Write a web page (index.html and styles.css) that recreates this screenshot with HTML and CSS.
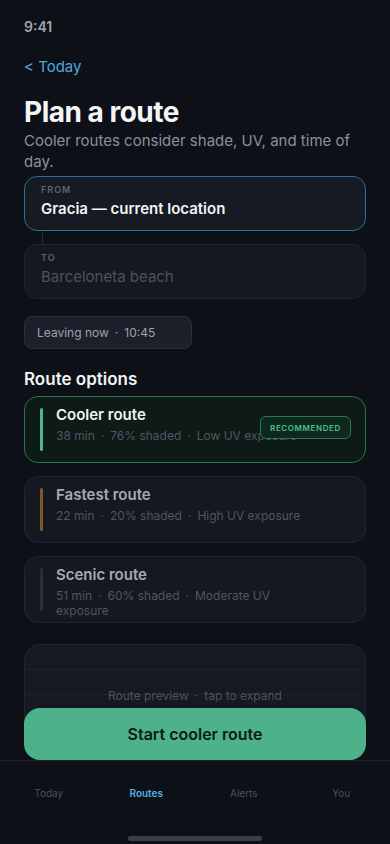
FILE: index.html
```html
<!DOCTYPE html>
<html lang="en">
<head>
  <meta charset="UTF-8" />
  <title>Plan a route</title>
  <link rel="stylesheet" href="styles.css">
</head>
<body>
  <div class="screen">
    <div class="status">9:41</div>

    <main class="content">
      <a class="back" href="#">&lt; Today</a>
      <h1>Plan a route</h1>
      <p class="subtitle">Cooler routes consider shade, UV, and time of day.</p>

      <div class="field field-active">
        <span class="field-label">From</span>
        <span class="field-value">Gracia — current location</span>
      </div>
      <div class="connector"></div>
      <div class="field">
        <span class="field-label">To</span>
        <span class="field-value placeholder">Barceloneta beach</span>
      </div>

      <div class="pill">Leaving now<span class="sep">·</span>10:45</div>

      <h2>Route options</h2>

      <div class="routes">
        <div class="route route-cool">
          <div class="route-bar"></div>
          <div class="route-text">
            <div class="route-title">Cooler route</div>
            <div class="route-meta">38 min<span class="sep">·</span>76% shaded<span class="sep">·</span>Low UV exposure</div>
          </div>
          <span class="badge">Recommended</span>
        </div>

        <div class="route route-fast">
          <div class="route-bar"></div>
          <div class="route-text">
            <div class="route-title">Fastest route</div>
            <div class="route-meta">22 min<span class="sep">·</span>20% shaded<span class="sep">·</span>High UV exposure</div>
          </div>
        </div>

        <div class="route route-scenic">
          <div class="route-bar"></div>
          <div class="route-text">
            <div class="route-title">Scenic route</div>
            <div class="route-meta">51 min<span class="sep">·</span>60% shaded<span class="sep">·</span>Moderate UV exposure</div>
          </div>
        </div>
      </div>

      <div class="map">Route preview<span class="sep">·</span>tap to expand</div>
    </main>

    <div class="cta">
      <button class="start">Start cooler route</button>
    </div>

    <nav class="tabs">
      <a href="#">Today</a>
      <a href="#" class="active">Routes</a>
      <a href="#">Alerts</a>
      <a href="#">You</a>
    </nav>
    <div class="home-bar"></div>
  </div>
</body>
</html>
```

FILE: styles.css
```css
* {
  box-sizing: border-box;
  margin: 0;
  padding: 0;
}

body {
  background: #0d1016;
  font-family: Inter, 'Noto Sans', sans-serif;
  color: #f1f3f5;
}

a {
  text-decoration: none;
}

.screen {
  position: relative;
  width: 390px;
  height: 844px;
  overflow: hidden;
  display: flex;
  flex-direction: column;
  background: #0d1016;
}

.status {
  height: 37px;
  padding: 17px 24px 0;
  font-size: 14px;
  line-height: 20px;
  font-weight: 600;
  color: #a1a5ad;
}

.content {
  flex: 1;
  overflow: hidden;
  padding: 0 24px;
  display: flex;
  flex-direction: column;
}

.back {
  margin-top: 20px;
  font-size: 15px;
  line-height: 20px;
  color: #4aa9dc;
}

h1 {
  margin-top: 19px;
  font-size: 28px;
  line-height: 32px;
  font-weight: 700;
  letter-spacing: -0.5px;
  color: #f4f5f7;
}

.subtitle {
  margin-top: 2px;
  font-size: 15px;
  line-height: 21px;
  color: #8a919e;
}

.field {
  margin-top: 4px;
  height: 55px;
  padding: 7px 16px 0;
  border: 1px solid #1f2430;
  border-radius: 13px;
  background: #141820;
  display: flex;
  flex-direction: column;
  gap: 3px;
}

.connector + .field {
  margin-top: 0;
}

.field-active {
  border-color: #2f6f93;
  background: #151a23;
}

.field-label {
  font-size: 9px;
  line-height: 12px;
  font-weight: 600;
  letter-spacing: 1px;
  text-transform: uppercase;
  color: #5d6472;
}

.field-value {
  font-size: 15px;
  line-height: 20px;
  font-weight: 600;
  color: #f1f3f5;
}

.field-value.placeholder {
  font-weight: 400;
  color: #4c5361;
}

.connector {
  height: 13px;
  margin-left: 18px;
  border-left: 1px solid #262b36;
}

.sep {
  margin: 0 6px;
}

.pill {
  margin-top: 17px;
  width: 168px;
  height: 33px;
  padding: 0 12px;
  display: flex;
  align-items: center;
  font-size: 12px;
  color: #9ba1ac;
  background: #1b202b;
  border: 1px solid #2a303c;
  border-radius: 8px;
}

h2 {
  margin-top: 19px;
  font-size: 17px;
  line-height: 22px;
  font-weight: 600;
  color: #f1f3f5;
}

.routes {
  margin-top: 6px;
  display: flex;
  flex-direction: column;
  gap: 13px;
}

.route {
  position: relative;
  height: 67px;
  padding: 7px 15px 0;
  display: flex;
  align-items: flex-start;
  gap: 13px;
  background: #141820;
  border: 1px solid #212631;
  border-radius: 14px;
}

.route-bar {
  flex: none;
  width: 3px;
  height: 43px;
  margin-top: 4px;
  border-radius: 2px;
  background: #2a2e38;
}

.route-title {
  font-size: 15px;
  line-height: 22px;
  font-weight: 600;
  color: #a4aab5;
}

.route-meta {
  margin-top: 2px;
  max-width: 255px;
  font-size: 12px;
  line-height: 15px;
  color: #4f5664;
}

.route-cool {
  background: #0d1a16;
  border-color: #2b7556;
}

.route-cool .route-bar {
  background: #4cb88b;
}

.route-cool .route-title {
  color: #f1f3f5;
}

.route-fast .route-bar {
  background: #7b5a2b;
}

.badge {
  position: absolute;
  top: 19px;
  right: 14px;
  width: 91px;
  height: 23px;
  display: flex;
  align-items: center;
  justify-content: center;
  font-size: 8px;
  font-weight: 600;
  letter-spacing: 0.6px;
  text-transform: uppercase;
  color: #4fbf8c;
  background: #0e281d;
  border: 1px solid #2a7a55;
  border-radius: 6px;
}

.map {
  margin-top: 21px;
  height: 110px;
  padding-top: 42px;
  text-align: center;
  font-size: 12px;
  line-height: 18px;
  color: #4c5361;
  background-color: #151922;
  background-image: linear-gradient(#1c2230 1px, transparent 1px);
  background-size: 100% 25px;
  background-position: 0 24px;
  background-repeat: repeat-y;
  border: 1px solid #1f2430;
  border-radius: 16px;
}

.cta {
  position: absolute;
  left: 24px;
  right: 24px;
  bottom: 84px;
}

.start {
  width: 100%;
  height: 52px;
  font-family: inherit;
  font-size: 16px;
  font-weight: 600;
  color: #0e1a14;
  background: #4db28a;
  border: none;
  border-radius: 16px;
  cursor: pointer;
}

.tabs {
  flex: none;
  height: 84px;
  display: grid;
  grid-template-columns: repeat(4, 1fr);
  border-top: 1px solid #1c2233;
  background: #0d1016;
}

.tabs a {
  padding-top: 24px;
  text-align: center;
  font-size: 10px;
  line-height: 16px;
  color: #4b5260;
}

.tabs a.active {
  color: #4fb3e6;
  font-weight: 600;
}

.home-bar {
  position: absolute;
  left: 128px;
  bottom: 3px;
  width: 134px;
  height: 5px;
  border-radius: 3px;
  background: #3b3e45;
}
```
